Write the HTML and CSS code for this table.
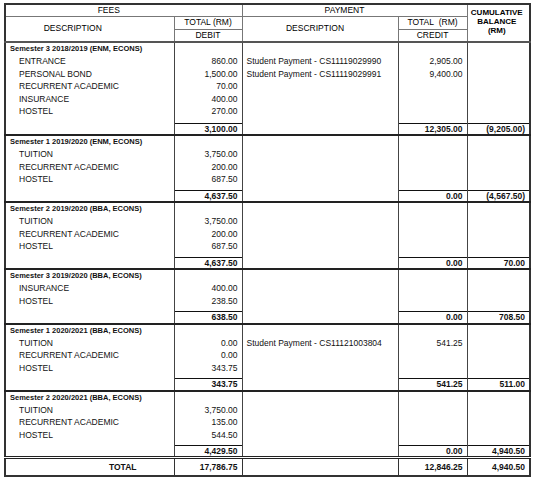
FILE: index.html
```html
<!DOCTYPE html>
<html lang="en">
<head>
    <meta charset="UTF-8">
    <meta name="viewport" content="width=device-width, initial-scale=1.0">
    <title>Statement of Account</title>
    <link rel="stylesheet" href="styles.css">
</head>
<body>

    <table class="ledger">
        <colgroup>
            <col class="c-desc">
            <col class="c-debit">
            <col class="c-pay">
            <col class="c-credit">
            <col class="c-bal">
        </colgroup>

        <thead>
            <tr class="h1">
                <th colspan="2" class="fees">FEES</th>
                <th colspan="2" class="payment">PAYMENT</th>
                <th rowspan="3" class="bal">CUMULATIVE<br>BALANCE<br>(RM)</th>
            </tr>
            <tr class="h2">
                <th rowspan="2" class="desc">DESCRIPTION</th>
                <th>TOTAL (RM)</th>
                <th rowspan="2" class="pdesc">DESCRIPTION</th>
                <th>TOTAL&nbsp; (RM)</th>
            </tr>
            <tr class="h3">
                <th>DEBIT</th>
                <th>CREDIT</th>
            </tr>
        </thead>

        <!-- Semester 3 2018/2019 -->
        <tbody class="sem">
            <tr class="title"><td class="sem-name">Semester 3 2018/2019 (ENM, ECONS)</td><td></td><td></td><td></td><td></td></tr>
            <tr class="item"><td class="fee">ENTRANCE</td><td class="num">860.00</td><td class="pay">Student Payment - CS11119029990</td><td class="num">2,905.00</td><td></td></tr>
            <tr class="item"><td class="fee">PERSONAL BOND</td><td class="num">1,500.00</td><td class="pay">Student Payment - CS11119029991</td><td class="num">9,400.00</td><td></td></tr>
            <tr class="item"><td class="fee">RECURRENT ACADEMIC</td><td class="num">70.00</td><td></td><td></td><td></td></tr>
            <tr class="item"><td class="fee">INSURANCE</td><td class="num">400.00</td><td></td><td></td><td></td></tr>
            <tr class="item"><td class="fee">HOSTEL</td><td class="num">270.00</td><td></td><td></td><td></td></tr>
            <tr class="gap"><td></td><td></td><td></td><td></td><td></td></tr>
            <tr class="sub"><td></td><td class="num">3,100.00</td><td></td><td class="num">12,305.00</td><td class="num">(9,205.00)</td></tr>
        </tbody>

        <!-- Semester 1 2019/2020 -->
        <tbody class="sem">
            <tr class="title"><td class="sem-name">Semester 1 2019/2020 (ENM, ECONS)</td><td></td><td></td><td></td><td></td></tr>
            <tr class="item"><td class="fee">TUITION</td><td class="num">3,750.00</td><td></td><td></td><td></td></tr>
            <tr class="item"><td class="fee">RECURRENT ACADEMIC</td><td class="num">200.00</td><td></td><td></td><td></td></tr>
            <tr class="item"><td class="fee">HOSTEL</td><td class="num">687.50</td><td></td><td></td><td></td></tr>
            <tr class="gap"><td></td><td></td><td></td><td></td><td></td></tr>
            <tr class="sub"><td></td><td class="num">4,637.50</td><td></td><td class="num">0.00</td><td class="num">(4,567.50)</td></tr>
        </tbody>

        <!-- Semester 2 2019/2020 -->
        <tbody class="sem">
            <tr class="title"><td class="sem-name">Semester 2 2019/2020 (BBA, ECONS)</td><td></td><td></td><td></td><td></td></tr>
            <tr class="item"><td class="fee">TUITION</td><td class="num">3,750.00</td><td></td><td></td><td></td></tr>
            <tr class="item"><td class="fee">RECURRENT ACADEMIC</td><td class="num">200.00</td><td></td><td></td><td></td></tr>
            <tr class="item"><td class="fee">HOSTEL</td><td class="num">687.50</td><td></td><td></td><td></td></tr>
            <tr class="gap"><td></td><td></td><td></td><td></td><td></td></tr>
            <tr class="sub"><td></td><td class="num">4,637.50</td><td></td><td class="num">0.00</td><td class="num">70.00</td></tr>
        </tbody>

        <!-- Semester 3 2019/2020 -->
        <tbody class="sem">
            <tr class="title"><td class="sem-name">Semester 3 2019/2020 (BBA, ECONS)</td><td></td><td></td><td></td><td></td></tr>
            <tr class="item"><td class="fee">INSURANCE</td><td class="num">400.00</td><td></td><td></td><td></td></tr>
            <tr class="item"><td class="fee">HOSTEL</td><td class="num">238.50</td><td></td><td></td><td></td></tr>
            <tr class="gap"><td></td><td></td><td></td><td></td><td></td></tr>
            <tr class="sub"><td></td><td class="num">638.50</td><td></td><td class="num">0.00</td><td class="num">708.50</td></tr>
        </tbody>

        <!-- Semester 1 2020/2021 -->
        <tbody class="sem">
            <tr class="title"><td class="sem-name">Semester 1 2020/2021 (BBA, ECONS)</td><td></td><td></td><td></td><td></td></tr>
            <tr class="item"><td class="fee">TUITION</td><td class="num">0.00</td><td class="pay">Student Payment - CS11121003804</td><td class="num">541.25</td><td></td></tr>
            <tr class="item"><td class="fee">RECURRENT ACADEMIC</td><td class="num">0.00</td><td></td><td></td><td></td></tr>
            <tr class="item"><td class="fee">HOSTEL</td><td class="num">343.75</td><td></td><td></td><td></td></tr>
            <tr class="gap"><td></td><td></td><td></td><td></td><td></td></tr>
            <tr class="sub"><td></td><td class="num">343.75</td><td></td><td class="num">541.25</td><td class="num">511.00</td></tr>
        </tbody>

        <!-- Semester 2 2020/2021 -->
        <tbody class="sem">
            <tr class="title"><td class="sem-name">Semester 2 2020/2021 (BBA, ECONS)</td><td></td><td></td><td></td><td></td></tr>
            <tr class="item"><td class="fee">TUITION</td><td class="num">3,750.00</td><td></td><td></td><td></td></tr>
            <tr class="item"><td class="fee">RECURRENT ACADEMIC</td><td class="num">135.00</td><td></td><td></td><td></td></tr>
            <tr class="item"><td class="fee">HOSTEL</td><td class="num">544.50</td><td></td><td></td><td></td></tr>
            <tr class="gap"><td></td><td></td><td></td><td></td><td></td></tr>
            <tr class="sub"><td></td><td class="num">4,429.50</td><td></td><td class="num">0.00</td><td class="num">4,940.50</td></tr>
        </tbody>

        <tfoot>
            <tr class="total">
                <td class="total-label">TOTAL</td>
                <td class="num">17,786.75</td>
                <td></td>
                <td class="num">12,846.25</td>
                <td class="num">4,940.50</td>
            </tr>
        </tfoot>
    </table>

</body>
</html>
```

FILE: styles.css
```css
* {
    margin: 0;
    padding: 0;
    box-sizing: border-box;
}

body {
    font-family: "Liberation Sans", Arial, sans-serif;
    background-color: #ffffff;
    color: #111;
    padding: 3px 0 0 4px;
}

.ledger {
    border-collapse: collapse;
    table-layout: fixed;
    width: 525px;
    border: 2px solid #333;
    font-size: 8.5px;
}

.c-desc { width: 169px; }
.c-debit { width: 68px; }
.c-pay { width: 156px; }
.c-credit { width: 69px; }
.c-bal { width: 63px; }

/* Header */
thead th {
    font-weight: normal;
    font-size: 8.5px;
    text-align: center;
    color: #000;
    border: 1px solid #777;
    line-height: 9px;
}

.h1 th { height: 12px; }
.h2 th { height: 13px; }
.h3 th { height: 13px; border-bottom: 2px solid #555; }

thead th.fees { padding-right: 30px; }
thead th.payment { padding-right: 20px; }
thead th.desc { padding-right: 34px; border-bottom: 2px solid #555; }
thead th.pdesc { padding-right: 10px; border-bottom: 2px solid #555; }

thead th.bal {
    font-weight: bold;
    font-size: 8px;
    padding-right: 3px;
    padding-bottom: 3px;
    border-bottom: 2px solid #555;
}

/* Semester blocks */
tbody.sem {
    border-top: 2px solid #222;
}

tbody td {
    border-left: 1px solid #444;
    border-right: 1px solid #444;
    white-space: nowrap;
    line-height: 10px;
    vertical-align: middle;
}

.title td { height: 13px; }
.item td { height: 12.5px; }
.gap td { height: 4.5px; }
.sem:first-of-type .gap td { height: 5.5px; }

.sub td {
    height: 12px;
    font-weight: bold;
}

.sub td.num {
    border-top: 1px solid #111;
}

.sem-name {
    font-weight: bold;
    font-size: 7.5px;
    padding-left: 4px;
}

.fee {
    padding-left: 13px;
}

.pay {
    padding-left: 4px;
}

.num {
    text-align: right;
    padding-right: 4px;
}

/* Grand total */
tfoot {
    border-top: 3px double #222;
}

.total td {
    height: 18px;
    font-weight: bold;
    border: 1px solid #333;
    border-bottom: 2px solid #333;
}

.total .total-label {
    text-align: center;
    padding-left: 66px;
}
```
